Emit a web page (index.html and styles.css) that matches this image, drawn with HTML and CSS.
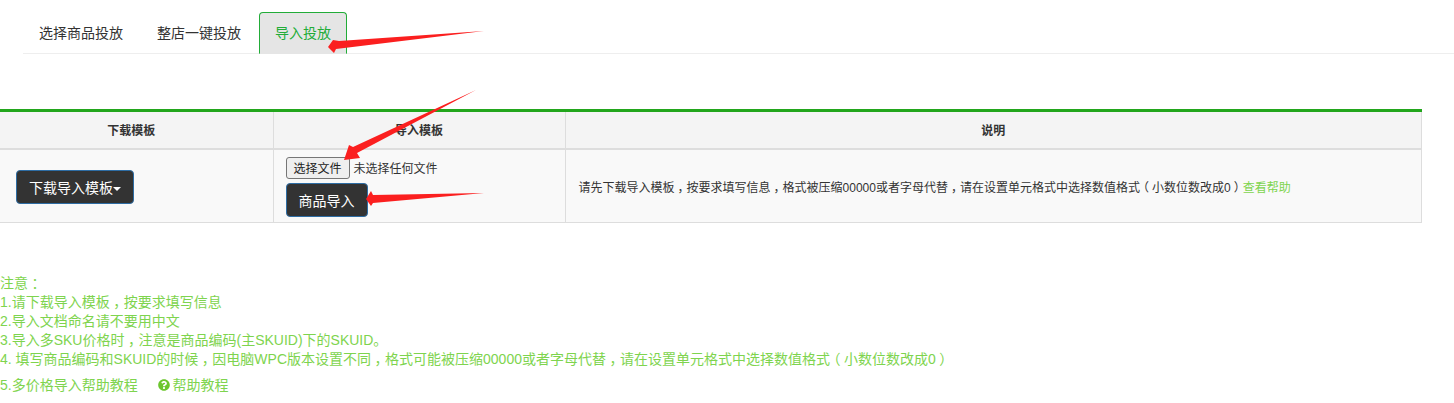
FILE: index.html
```html
<!DOCTYPE html>
<html lang="zh-CN">

<head>
    <meta charset="UTF-8">
    <title>导入投放</title>
    <link rel="stylesheet" href="styles.css">
</head>

<body>
    <ul class="tabs">
        <li><a href="#">选择商品投放</a></li>
        <li><a href="#">整店一键投放</a></li>
        <li class="active"><a href="#">导入投放</a></li>
    </ul>

    <table class="import-table">
        <thead>
            <tr>
                <th class="col-download">下载模板</th>
                <th class="col-import">导入模板</th>
                <th>说明</th>
            </tr>
        </thead>
        <tbody>
            <tr>
                <td class="col-download">
                    <button type="button" class="btn-dark">下载导入模板<span class="caret"></span></button>
                </td>
                <td class="col-import">
                    <div class="file-row">
                        <button type="button" class="file-btn">选择文件</button>
                        <span class="file-name">未选择任何文件</span>
                    </div>
                    <button type="button" class="btn-dark">商品导入</button>
                </td>
                <td class="desc">请先下载导入模板<span class="pu">，</span>按要求填写信息<span class="pu">，</span>格式被压缩00000或者字母代替<span class="pu">，</span>请在设置单元格式中选择数值格式<span class="pu">（</span>小数位数改成0<span class="pu">）</span><a href="#">查看帮助</a></td>
            </tr>
        </tbody>
    </table>

    <div class="notes">
        <p>注意<span class="pu">：</span></p>
        <p>1.请下载导入模板<span class="pu">，</span>按要求填写信息</p>
        <p>2.导入文档命名请不要用中文</p>
        <p>3.导入多SKU价格时<span class="pu">，</span>注意是商品编码(主SKUID)下的SKUID。</p>
        <p>4. 填写商品编码和SKUID的时候<span class="pu">，</span>因电脑WPC版本设置不同<span class="pu">，</span>格式可能被压缩00000或者字母代替<span class="pu">，</span>请在设置单元格式中选择数值格式<span class="pu">（</span>小数位数改成0<span class="pu">）</span></p>
        <p class="help-line">5.多价格导入帮助教程
            <a href="#" class="help-link">
                <svg class="help-icon" viewBox="0 0 512 512"><path d="M504 256c0 136.997-111.043 248-248 248S8 392.997 8 256C8 119.083 119.043 8 256 8s248 111.083 248 248zM262.655 90c-54.497 0-89.255 22.957-116.549 63.758-3.536 5.286-2.353 12.415 2.715 16.258l34.699 26.31c5.205 3.947 12.621 3.008 16.665-2.122 17.864-22.658 30.113-35.797 57.303-35.797 20.429 0 45.698 13.148 45.698 32.958 0 14.976-12.363 22.667-32.534 33.976C247.128 238.528 216 254.941 216 296v4c0 6.627 5.373 12 12 12h56c6.627 0 12-5.373 12-12v-1.333c0-28.462 83.186-29.647 83.186-106.667 0-58.002-60.165-102-116.531-102zM256 338c-25.365 0-46 20.635-46 46 0 25.364 20.635 46 46 46s46-20.636 46-46c0-25.365-20.635-46-46-46z"/></svg>帮助教程</a>
        </p>
    </div>

    <!-- red arrows drawn over the screenshot -->
    <svg class="arrows" width="1454" height="403" viewBox="0 0 1454 403">
        <polygon points="484,31 339,41 333,40 328,47 334,53 336,49" />
        <polygon points="476,90 353,147 349,145 344,160 360,158 357,153" />
        <polygon points="484,193 373,195 371,191 366,199 371,206 373,203" />
    </svg>
</body>

</html>
```

FILE: styles.css
```css
* {
    box-sizing: border-box;
}

html,
body {
    height: 403px;
    overflow: hidden;
}

body {
    margin: 0;
    font-family: "Liberation Sans", "Noto Sans CJK SC", sans-serif;
    font-size: 12px;
    line-height: 20px;
    color: #333;
    background-color: #fff;
    position: relative;
}

a {
    text-decoration: none;
}

/* full width punctuation sits centred in its box in the original */
.pu {
    padding: 0 0.25em;
    font-feature-settings: "halt";
}

.tabs {
    display: flex;
    gap: 2px;
    list-style: none;
    margin: 0 0 0 23px;
    padding: 12px 0 0;
    height: 54px;
    border-bottom: 1px solid #eee;
}

.tabs a {
    display: block;
    height: 42px;
    padding: 10px 15px;
    border: 1px solid transparent;
    border-radius: 4px 4px 0 0;
    font-size: 14px;
    color: #333;
}

.tabs .active a {
    color: #22ac38;
    background-color: #e5e5e5;
    border-color: #22ac38;
    border-bottom-color: transparent;
}

.import-table {
    width: 1422px;
    margin-top: 55px;
    border-collapse: collapse;
    table-layout: fixed;
    background-color: #f9f9f9;
    border-top: 3px solid #22a61c;
}

.import-table th,
.import-table td {
    border: 1px solid #ddd;
    border-left: none;
}

.import-table tr:first-child th {
    border-top: none;
}

.import-table th {
    height: 38px;
    padding-top: 4px;
    background-color: #f4f4f4;
    border-bottom: 2px solid #ddd;
    text-align: center;
    font-weight: bold;
}

th.col-download {
    padding-right: 11px;
}

.import-table td {
    height: 74px;
    padding: 7px 12px 5px;
    vertical-align: middle;
}

.col-download {
    width: 273px;
}

.col-import {
    width: 292px;
}

td.col-download {
    padding-left: 16px;
}

.btn-dark {
    height: 34px;
    padding: 0 12px;
    border: 1px solid #2e6da4;
    border-radius: 4px;
    background-color: #333;
    color: #fff;
    font-family: inherit;
    font-size: 14px;
}

.caret {
    display: inline-block;
    margin-bottom: 2px;
    border-top: 4px solid #fff;
    border-left: 4px solid transparent;
    border-right: 4px solid transparent;
}

.file-row {
    display: flex;
    align-items: center;
    gap: 4px;
    margin-bottom: 4px;
}

.file-btn {
    height: 22px;
    width: 64px;
    padding: 0;
    border: 1px solid #767676;
    border-radius: 3px;
    background-color: #efefef;
    color: #222;
    font-family: inherit;
    font-size: 12px;
}

.file-name {
    padding-top: 2px;
}

.import-table .desc {
    padding: 9px 12px 5px 13px;
}

.desc a {
    color: #7ed44e;
}

.notes {
    margin-top: 51px;
    font-size: 14px;
    line-height: 19px;
    color: #7ed44e;
}

.notes p {
    margin: 0;
}

.notes .help-line {
    margin-top: 7px;
}

.help-link {
    margin-left: 16px;
    color: #7ed44e;
}

.help-icon {
    width: 12px;
    height: 12px;
    margin-right: 3px;
    fill: #6cc62e;
    vertical-align: -1px;
}

.arrows {
    position: absolute;
    top: 0;
    left: 0;
    pointer-events: none;
}

.arrows polygon {
    fill: #fb1f1f;
}
```
